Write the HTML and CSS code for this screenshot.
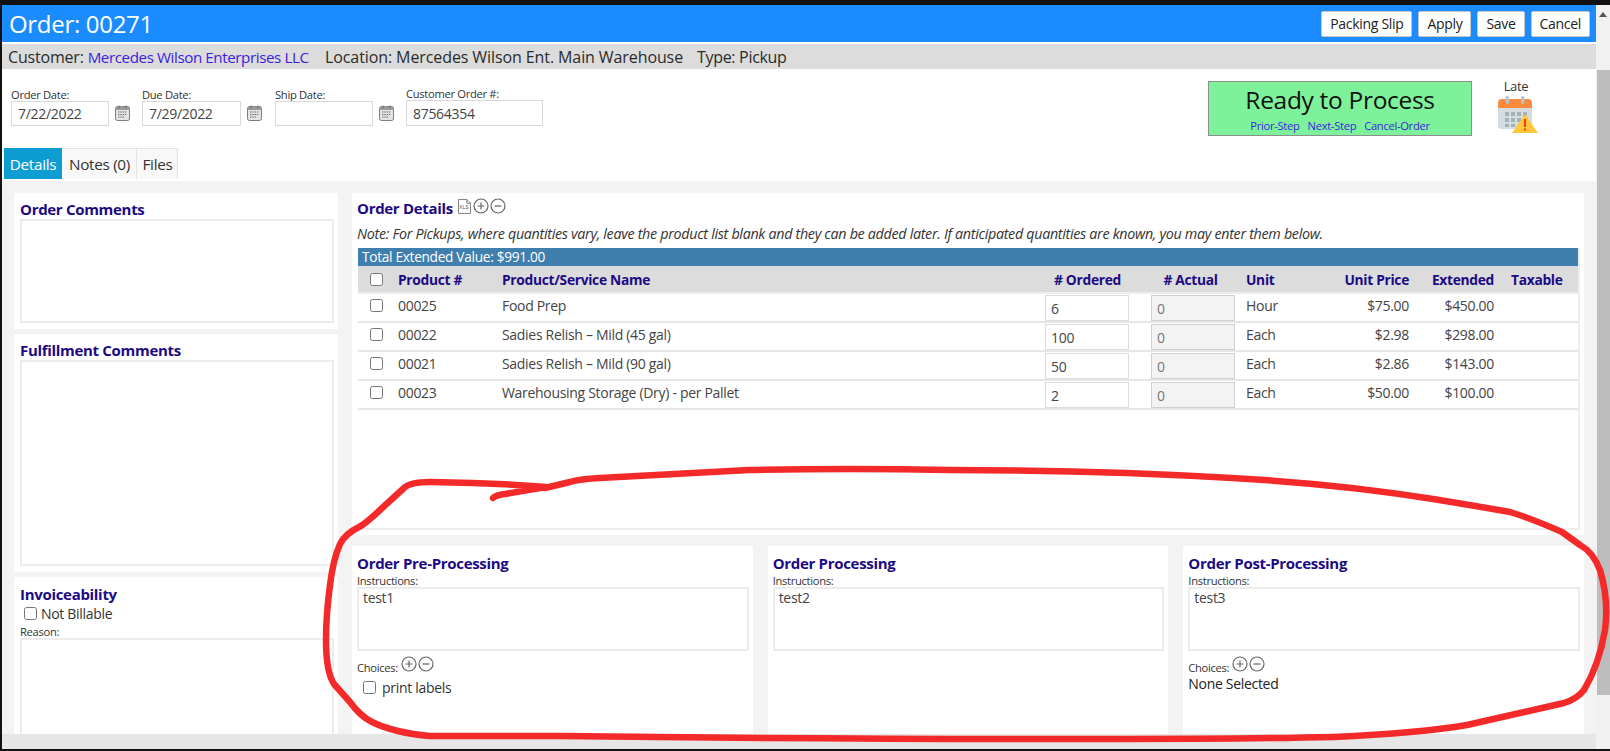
FILE: index.html
```html
<!DOCTYPE html>
<html lang="en">
<head>
<meta charset="utf-8">
<title>Order 00271</title>
<link rel="stylesheet" href="styles.css">
</head>
<body>
<svg class="defs" width="0" height="0" aria-hidden="true">
  <symbol id="cal" viewBox="0 0 15 16">
    <rect x="0.5" y="1.5" width="14" height="14" rx="2" fill="#e4e4e4" stroke="#7d7d7d"/>
    <rect x="0.5" y="1.5" width="14" height="3.5" rx="1.5" fill="#9a9a9a"/>
    <path d="M4 0.5v3M11 0.5v3" stroke="#777" stroke-width="1.2"/>
    <path d="M3 7h9M3 9.500h9M3 12h7" stroke="#666" stroke-width="1.2" stroke-dasharray="1.400 .9"/>
  </symbol>
  <symbol id="plus" viewBox="0 0 16 16">
    <circle cx="8" cy="8" r="7" fill="#fff" stroke="#666" stroke-width="1.2"/>
    <path d="M4.500 8h7M8 4.500v7" stroke="#666" stroke-width="1.200"/>
  </symbol>
  <symbol id="minus" viewBox="0 0 16 16">
    <circle cx="8" cy="8" r="7" fill="#fff" stroke="#666" stroke-width="1.2"/>
    <path d="M4.500 8h7" stroke="#666" stroke-width="1.200"/>
  </symbol>
</svg>
<div class="window">
  <div class="app">
    <header class="title-bar">
      <h1 class="title">Order: 00271</h1>
      <div class="actions">
        <button class="btn">Packing Slip</button>
        <button class="btn">Apply</button>
        <button class="btn">Save</button>
        <button class="btn">Cancel</button>
      </div>
    </header>
    <div class="info-bar">
      <span class="info-customer">Customer: <a class="link">Mercedes Wilson Enterprises LLC</a></span>
      <span class="info-location">Location: Mercedes Wilson Ent. Main Warehouse</span>
      <span>Type: Pickup</span>
    </div>
    <section class="top-form">
      <div class="field f-order"><label class="lbl">Order Date:</label><input class="input" value="7/22/2022"></div>
      <svg class="cal-icon"><use href="#cal"/></svg>
      <div class="field f-due"><label class="lbl">Due Date:</label><input class="input" value="7/29/2022"></div>
      <svg class="cal-icon"><use href="#cal"/></svg>
      <div class="field f-ship"><label class="lbl">Ship Date:</label><input class="input" value=""></div>
      <svg class="cal-icon"><use href="#cal"/></svg>
      <div class="field f-cust"><label class="lbl">Customer Order #:</label><input class="input" value="87564354"></div>
      <div class="status">
        <div class="status-title">Ready to Process</div>
        <div class="status-links"><a class="link">Prior-Step</a><a class="link">Next-Step</a><a class="link">Cancel-Order</a></div>
      </div>
      <div class="late">
        <div class="late-text">Late</div>
        <svg class="late-icon" viewBox="0 0 40 37" aria-hidden="true">
          <path d="M0 7a4 4 0 0 1 4-4h26a4 4 0 0 1 4 4v5H0z" fill="#fb8a3c"/>
          <path d="M0 12h34v18a3 3 0 0 1-3 3H3a3 3 0 0 1-3-3z" fill="#d5dde1"/>
          <rect x="7.500" y="0" width="3.500" height="8" rx="1.700" fill="#b9c2c7"/>
          <rect x="23" y="0" width="3.500" height="8" rx="1.700" fill="#b9c2c7"/>
          <path d="M7 16h4v4H7zM13 16h4v4h-4zM19 16h4v4h-4zM25 16h4v4h-4zM7 22h4v4H7zM13 22h4v4h-4zM19 22h4v4h-4zM7 28h4v3H7zM13 28h4v3h-4z" fill="#a5b1b8"/>
          <path d="M27 18 40 37H14z" fill="#fdc93a"/>
          <path d="M27 23v8M27 32.500v2" stroke="#ee3b2c" stroke-width="2.200"/>
        </svg>
      </div>
    </section>
    <nav class="tabs">
      <a class="tab tab-active">Details</a>
      <a class="tab">Notes (0)</a>
      <a class="tab">Files</a>
    </nav>
    <main class="content">
      <aside class="left">
        <section class="card">
          <h2 class="heading">Order Comments</h2>
          <textarea class="area area-comments"></textarea>
        </section>
        <section class="card">
          <h2 class="heading">Fulfillment Comments</h2>
          <textarea class="area area-fulfil"></textarea>
        </section>
        <section class="card card-fill">
          <h2 class="heading">Invoiceability</h2>
          <label class="billable"><input type="checkbox" class="check">Not Billable</label>
          <div class="lbl reason">Reason:</div>
          <textarea class="area area-reason"></textarea>
        </section>
      </aside>
      <div class="right">
        <section class="card details">
          <div class="details-head">
            <h2 class="heading">Order Details</h2>
            <svg class="xls" viewBox="0 0 14 16" aria-hidden="true">
              <path d="M.5.500h9l4 4v11H.5z" fill="#fff" stroke="#777"/>
              <path d="M9.500.500v4h4" fill="none" stroke="#777"/>
              <text x="1.200" y="11" class="xls-text">XLS</text>
            </svg>
            <svg class="round"><use href="#plus"/></svg>
            <svg class="round"><use href="#minus"/></svg>
          </div>
          <p class="note">Note: For Pickups, where quantities vary, leave the product list blank and they can be added later. If anticipated quantities are known, you may enter them below.</p>
          <div class="table-box">
            <div class="total">Total Extended Value: $991.00</div>
            <table class="grid">
              <colgroup>
                <col class="c-check"><col class="c-prod"><col class="c-name"><col class="c-ord"><col class="c-act"><col class="c-unit"><col class="c-price"><col class="c-ext"><col>
              </colgroup>
              <thead>
                <tr>
                  <th class="cell-check"><input type="checkbox" class="check"></th>
                  <th>Product #</th>
                  <th>Product/Service Name</th>
                  <th class="center">#&nbsp;Ordered</th>
                  <th class="center th-act">#&nbsp;Actual</th>
                  <th>Unit</th>
                  <th class="num">Unit Price</th>
                  <th class="num">Extended</th>
                  <th class="tax">Taxable</th>
                </tr>
              </thead>
              <tbody>
                <tr>
                  <td class="cell-check"><input type="checkbox" class="check"></td><td>00025</td><td>Food Prep</td>
                  <td class="cell-input"><input class="qty" value="6"></td><td class="cell-input"><input class="qty qty-off" value="0" disabled></td>
                  <td>Hour</td><td class="num">$75.00</td><td class="num">$450.00</td><td></td>
                </tr>
                <tr>
                  <td class="cell-check"><input type="checkbox" class="check"></td><td>00022</td><td>Sadies Relish – Mild (45 gal)</td>
                  <td class="cell-input"><input class="qty" value="100"></td><td class="cell-input"><input class="qty qty-off" value="0" disabled></td>
                  <td>Each</td><td class="num">$2.98</td><td class="num">$298.00</td><td></td>
                </tr>
                <tr>
                  <td class="cell-check"><input type="checkbox" class="check"></td><td>00021</td><td>Sadies Relish – Mild (90 gal)</td>
                  <td class="cell-input"><input class="qty" value="50"></td><td class="cell-input"><input class="qty qty-off" value="0" disabled></td>
                  <td>Each</td><td class="num">$2.86</td><td class="num">$143.00</td><td></td>
                </tr>
                <tr>
                  <td class="cell-check"><input type="checkbox" class="check"></td><td>00023</td><td>Warehousing Storage (Dry) - per Pallet</td>
                  <td class="cell-input"><input class="qty" value="2"></td><td class="cell-input"><input class="qty qty-off" value="0" disabled></td>
                  <td>Each</td><td class="num">$50.00</td><td class="num">$100.00</td><td></td>
                </tr>
              </tbody>
            </table>
          </div>
        </section>
        <div class="steps">
          <section class="card step">
            <h2 class="heading">Order Pre-Processing</h2>
            <div class="lbl">Instructions:</div>
            <textarea class="area area-step">test1</textarea>
            <div class="choices"><span class="lbl">Choices:</span><svg class="round"><use href="#plus"/></svg><svg class="round"><use href="#minus"/></svg></div>
            <label class="choice"><input type="checkbox" class="check">print labels</label>
          </section>
          <section class="card step">
            <h2 class="heading">Order Processing</h2>
            <div class="lbl">Instructions:</div>
            <textarea class="area area-step">test2</textarea>
          </section>
          <section class="card step">
            <h2 class="heading">Order Post-Processing</h2>
            <div class="lbl">Instructions:</div>
            <textarea class="area area-step">test3</textarea>
            <div class="choices"><span class="lbl">Choices:</span><svg class="round"><use href="#plus"/></svg><svg class="round"><use href="#minus"/></svg></div>
            <div class="none">None Selected</div>
          </section>
        </div>
      </div>
    </main>
    <div class="hscroll"></div>
  </div>
  <div class="vscroll">
    <div class="arrow"></div>
    <div class="thumb"></div>
  </div>
</div>
<svg class="scribble" viewBox="0 0 1610 751" aria-hidden="true">
  <path d="M493 498Q496 495 505 494L546 487Q500 483 430 482Q410 482 404 488L380 510Q365 524 359 527Q345 534 340 544Q333 560 330 585Q326 615 326 640Q326 672 334 684L350 702Q360 716 372 722Q395 733 430 736L560 736Q800 739 1100 739Q1250 739 1333 737Q1420 733 1467 725L1564 703Q1577 699 1584 690Q1599 665 1605 630Q1609 600 1600 570Q1593 552 1580 545L1562 532Q1530 518 1510 512Q1470 505 1433 499Q1340 484 1232 478Q1100 470 950 470Q850 468 749 470Q680 474 600 478Q580 479 570 482L545 488"/>
</svg>
</body>
</html>
```
FILE: styles.css
```css
* { box-sizing: border-box; }
html, body { margin: 0; height: 751px; overflow: hidden; }
body {
  background: #111;
  font-family: "Open Sans", "Noto Sans", sans-serif;
  letter-spacing: -0.022em;
  font-size: 14px;
  color: #333;
  padding: 5px 0 2px 2px;
  position: relative;
}
.defs { position: absolute; }
.window { display: flex; height: 744px; }
.app { width: 1594px; display: flex; flex-direction: column; background: #fff; }

.title-bar {
  height: 37px;
  flex: none;
  background: #1a8cff;
  display: flex;
  align-items: center;
  justify-content: space-between;
  padding: 0 6px 0 7px;
}
.title { margin: 0; font-size: 24px; font-weight: 400; color: #fff; }
.actions { display: flex; gap: 6px; }
.btn {
  height: 26px;
  padding: 0 8px;
  background: #fff;
  border: 1px solid #c8c8c8;
  border-radius: 2px;
  font: inherit;
  letter-spacing: inherit;
  font-size: 14px;
  color: #222;
}

.info-bar {
  margin-top: 2px;
  height: 25px;
  flex: none;
  background: #dcdcdc;
  padding: 0 6px;
  display: flex;
  align-items: center;
  font-size: 16px;
  color: #2b2b2b;
}
.info-customer { width: 317px; letter-spacing: -0.012em; }
.info-customer .link { font-size: 15.2px; letter-spacing: -0.028em; }
.info-location { width: 372px; letter-spacing: -0.006em; }
.link { color: #3a1fe0; }

.top-form {
  height: 79px;
  flex: none;
  display: flex;
  align-items: flex-start;
  padding: 12px 58px 0 9px;
}
.field { display: flex; flex-direction: column; padding-top: 7px; }
.lbl { font-size: 11.2px; line-height: 13px; color: #333; display: block; }
.f-order { width: 98px; }
.f-due { width: 99px; }
.f-ship { width: 98px; }
.f-cust { width: 137px; padding-top: 6px; }
.f-cust .input { height: 26px; }
.input {
  height: 25px;
  width: 100%;
  border: 1px solid #d9d9d9;
  padding: 0 6px;
  font: inherit;
  letter-spacing: inherit;
  font-size: 14px;
  color: #444;
  background: #fff;
  outline: none;
}
.cal-icon { width: 15px; height: 16px; margin: 24px 12px 0 6px; flex: none; }
.f-due + .cal-icon { margin-right: 13px; }

.status {
  margin-left: auto;
  width: 264px;
  height: 55px;
  border: 1px solid #8e8e8e;
  background: #7ef29a;
  text-align: center;
}
.status-title { font-size: 24.5px; line-height: 35px; color: #111; }
.status-links { display: flex; justify-content: center; gap: 8px; font-size: 11.2px; line-height: 18px; }
.late { margin-left: 26px; width: 40px; margin-top: -4px; }
.late-text { text-align: center; font-size: 13px; line-height: 19px; margin-right: 4px; }
.late-icon { width: 40px; height: 37px; display: block; }

.tabs { height: 33px; flex: none; display: flex; padding-left: 2px; align-items: flex-start; }
.tab {
  height: 31px;
  line-height: 30px;
  font-size: 15.3px;
  padding: 0 0 0 1px;
  text-align: center;
  background: #f8f8f8;
  border: 1px solid #e4e4e4;
  border-bottom: 0;
  border-left: 0;
  color: #333;
}
.tab:first-child { width: 58px; }
.tab:nth-child(2) { width: 75px; }
.tab:nth-child(3) { width: 41px; }
.tab-active { background: #0d9dd3; border-color: #0d9dd3; color: #fff; }

.content {
  flex: 1;
  min-height: 0;
  overflow: hidden;
  background: #f3f3f3;
  display: flex;
  gap: 14px;
  padding: 12px 12px 0;
}
.left { width: 324px; flex: none; display: flex; flex-direction: column; gap: 5px; }
.right { flex: 1; min-width: 0; display: flex; flex-direction: column; gap: 11px; }
.card { background: #fff; padding: 6px 4px 6px 6px; }
.card-fill { flex: 1; min-height: 0; overflow: hidden; padding-top: 7px; }
.heading { margin: 0; font-size: 15px; line-height: 20px; font-weight: 700; color: #1c0a85; }
.area {
  display: block;
  width: 100%;
  border: 2px solid #ececec;
  resize: none;
  font: inherit;
  letter-spacing: inherit;
  font-size: 14px;
  line-height: 17px;
  color: #444;
  padding: 0 4px;
  outline: none;
  overflow: hidden;
  background: #fff;
}
.area-comments { height: 104px; }
.area-fulfil { height: 206px; }
.area-reason { height: 200px; }
.area-step { height: 64px; }

.check { width: 13px; height: 13px; margin: 0; accent-color: #666; display: block; }
.billable { display: flex; align-items: center; gap: 4px; height: 18px; padding-left: 4px; font-size: 14px; color: #333; }
.reason { margin-top: 3px; }

.details { height: 342px; flex: none; padding: 5px 4px 5px 5px; display: flex; flex-direction: column; }
.details-head { display: flex; align-items: flex-start; height: 22px; }
.details-head .heading { line-height: 21px; }
.xls { width: 13px; height: 15px; margin: 1px 2px 0 5px; }
.xls-text { font-size: 5.500px; fill: #555; font-family: "Liberation Sans", sans-serif; letter-spacing: 0; }
.round { width: 16px; height: 16px; flex: none; margin-right: 1px; }
.note { margin: 4px 0 4px; font-style: italic; font-size: 14.3px; line-height: 20px; color: #333; white-space: nowrap; }
.table-box { flex: 1; border: solid #ededed; border-width: 0 2px 2px 0; margin-left: 1px; }
.total { height: 18px; line-height: 18px; background: #3f7fae; color: #fff; padding-left: 4px; font-size: 13.7px; }
.grid { width: 100%; border-collapse: collapse; table-layout: fixed; }
.c-check { width: 40px; }
.c-prod { width: 104px; }
.c-name { width: 533px; }
.c-ord { width: 105px; }
.c-act { width: 106px; }
.c-unit { width: 55px; }
.c-price { width: 108px; }
.c-ext { width: 85px; }
.grid th {
  height: 27px;
  background: #dcdcdc;
  border-bottom: 2px solid #ededed;
  text-align: left;
  color: #1c0a85;
  font-size: 13.800px;
  padding: 0;
}
.grid td { height: 28.750px; border-bottom: 2px solid #e6e6e6; padding: 0 0 4px; font-size: 14px; color: #444; }
.grid .center { text-align: center; }
.grid .th-act { padding-right: 5px; }
.grid .num { text-align: right; }
.grid th.tax { padding-left: 17px; }
.grid .cell-check { padding-left: 12px; }
.grid .cell-input { padding: 1px 0 0; }
.qty {
  display: block;
  width: 84px;
  height: 26px;
  margin: 0 0 0 10px;
  border: 1px solid #dcdcdc;
  font: inherit;
  letter-spacing: inherit;
  font-size: 14px;
  color: #444;
  padding: 0 5px;
  background: #fff;
}
.qty-off { background: #f3f3f3; border-color: #d0d0d0; margin-left: 11px; color: #777; }

.steps { flex: 1; min-height: 0; display: grid; grid-template-columns: repeat(3, 1fr); gap: 15px; }
.step { padding: 7px 4px 0 5px; }
.step .lbl { line-height: 13px; }
.step .heading { margin-bottom: 1px; }
.choices { display: flex; align-items: flex-end; margin-top: 2px; height: 24px; padding-bottom: 3px; }
.choices .lbl { margin-right: 3px; }
.choices .round { margin-bottom: 2px; }
.choice { display: flex; align-items: center; height: 18px; margin-top: 1px; padding-left: 6px; gap: 6px; font-size: 14px; color: #333; }
.none { font-size: 14px; line-height: 18px; margin-top: -2px; color: #222; }

.hscroll { height: 15px; flex: none; background: #e6e6e6; }
.vscroll { flex: 1; background: #f1f1f1; position: relative; display: flex; flex-direction: column; align-items: center; }
.arrow {
  margin-top: 7px;
  width: 0;
  height: 0;
  border: 4px solid transparent;
  border-top: 0;
  border-bottom: 5px solid #555;
}
.thumb { position: absolute; top: 65px; bottom: 54px; left: 1px; right: 0; background: #bdbdbd; }

.scribble {
  position: absolute;
  left: 0;
  top: 0;
  width: 1610px;
  height: 751px;
  pointer-events: none;
  fill: none;
  stroke: #f42a2a;
  stroke-width: 6.500;
  stroke-linecap: round;
  stroke-linejoin: round;
}
```
